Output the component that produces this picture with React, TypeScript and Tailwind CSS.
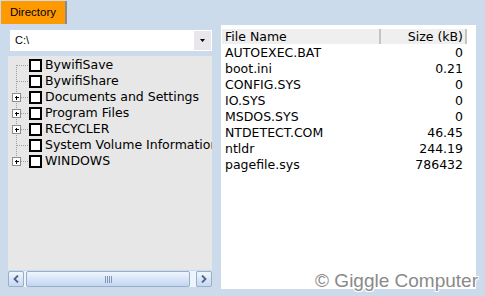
type Node = { name: string; expandable: boolean };

const folders: Node[] = [
  { name: "BywifiSave", expandable: false },
  { name: "BywifiShare", expandable: false },
  { name: "Documents and Settings", expandable: true },
  { name: "Program Files", expandable: true },
  { name: "RECYCLER", expandable: true },
  { name: "System Volume Information", expandable: false },
  { name: "WINDOWS", expandable: true },
];

const files = [
  { name: "AUTOEXEC.BAT", size: "0" },
  { name: "boot.ini", size: "0.21" },
  { name: "CONFIG.SYS", size: "0" },
  { name: "IO.SYS", size: "0" },
  { name: "MSDOS.SYS", size: "0" },
  { name: "NTDETECT.COM", size: "46.45" },
  { name: "ntldr", size: "244.19" },
  { name: "pagefile.sys", size: "786432" },
];

// dotted tree connector, one per row
function Connector({ first, last, plus }: { first: boolean; last: boolean; plus: boolean }) {
  return (
    <svg width="21" height="16" className="shrink-0" shapeRendering="crispEdges">
      <line x1="8.5" y1={first ? 8 : 0} x2="8.5" y2={last ? 8 : 16} stroke="#a0a0a0" strokeDasharray="1 1" />
      <line x1="9" y1="8.5" x2="21" y2="8.5" stroke="#a0a0a0" strokeDasharray="1 1" />
      {plus && (
        <>
          <rect x="4.5" y="4.5" width="8" height="8" fill="#fff" stroke="#8c8c8c" />
          <line x1="6.5" y1="8.5" x2="11" y2="8.5" stroke="#000" />
          <line x1="8.5" y1="6.5" x2="8.5" y2="11" stroke="#000" />
        </>
      )}
    </svg>
  );
}

function ScrollButton({ dir }: { dir: "left" | "right" }) {
  return (
    <div className="w-[16px] h-[16px] rounded-[2px] border border-[#9aaec8] bg-gradient-to-b from-[#f0f6fe] to-[#c6d8f2] flex items-center justify-center">
      <svg width="6" height="8" viewBox="0 0 6 8">
        <path
          d={dir === "left" ? "M5 0.5 L1.5 4 L5 7.5" : "M1 0.5 L4.5 4 L1 7.5"}
          fill="none"
          stroke="#4d6185"
          strokeWidth="1.8"
        />
      </svg>
    </div>
  );
}

export default function App() {
  return (
    <div className="relative w-[485px] h-[296px] bg-[#cbdbeb] overflow-hidden" style={{ fontFamily: "'DejaVu Sans', sans-serif" }}>
      {/* tab strip */}
      <div className="h-[24px] pt-[1px] pl-[1px] flex">
        <div className="w-[66px] h-[23px] bg-[#ff9900] border-r-2 border-[#8a8a8a] flex items-center justify-center text-[11.5px] text-black font-['Liberation_Sans',sans-serif]">
          Directory
        </div>
      </div>

      <div className="flex">
        {/* left: drive combo + folder tree */}
        <div className="w-[204px] ml-[8px] flex flex-col">
          <div className="ml-[2px] mt-[6px] h-[21px] bg-white flex items-center">
            <span className="flex-1 pl-[5px] text-[11px] font-['Liberation_Sans',sans-serif]">C:\</span>
            <div className="w-[17px] h-[19px] mr-[1px] bg-[#e9e7ec] flex items-center justify-center">
              <svg width="5" height="3" viewBox="0 0 5 3">
                <path d="M0 0 H5 L2.5 3 Z" fill="#000" />
              </svg>
            </div>
          </div>

          <div className="mt-[5px] h-[214px] bg-[#e7e7e7] overflow-hidden pt-[1px]">
            {folders.map((f, i) => (
              <div key={f.name} className="h-[16px] flex items-center whitespace-nowrap">
                <Connector first={i === 0} last={i === folders.length - 1} plus={f.expandable} />
                <div className="w-[13px] h-[13px] border-2 border-black bg-white shrink-0" />
                <span className="ml-[3px] text-[12.5px] leading-[16px] text-black">{f.name}</span>
              </div>
            ))}
          </div>

          <div className="mt-[1px] h-[16px] flex items-center">
            <ScrollButton dir="left" />
            <div className="flex-1 h-[16px] bg-[#eef4fd] flex pl-[2px] pr-[6px]">
              <div className="flex-1 h-[16px] rounded-[2px] border border-[#9aaec8] bg-gradient-to-b from-[#eef5ff] to-[#c3d6f1] flex items-center justify-center gap-[1px]">
                <div className="w-[1px] h-[7px] bg-[#8497b5]" />
                <div className="w-[1px] h-[7px] bg-[#8497b5]" />
                <div className="w-[1px] h-[7px] bg-[#8497b5]" />
                <div className="w-[1px] h-[7px] bg-[#8497b5]" />
              </div>
            </div>
            <ScrollButton dir="right" />
          </div>
        </div>

        {/* right: file list */}
        <div className="ml-[9px] mt-[1px] w-[255px] h-[264px] bg-white pt-[3px] pl-[1px]">
          <div className="w-[245px] h-[16px] flex bg-[#f0efef] text-[12.5px] text-black border-t border-white">
            <div className="w-[159px] pl-[3px] leading-[15px] border-r-2 border-[#c4c4c4]">File Name</div>
            <div className="flex-1 pr-[2px] text-right leading-[15px] border-r-2 border-[#c4c4c4]">Size (kB)</div>
          </div>
          <div className="pt-[1px]">
            {files.map((f) => (
              <div key={f.name} className="w-[245px] h-[16px] flex text-[12.5px] leading-[16px] text-black">
                <div className="w-[159px] pl-[3px]">{f.name}</div>
                <div className="flex-1 pr-[4px] text-right">{f.size}</div>
              </div>
            ))}
          </div>
        </div>
      </div>

      {/* watermark */}
      <div
        className="absolute right-[7px] bottom-[5px] text-[19px] leading-[20px] text-[#8a8a8a] font-['Liberation_Sans',sans-serif]"
        style={{ textShadow: "1px 1px 0 #fff, -1px -1px 0 #fff, 1px -1px 0 #fff, -1px 1px 0 #fff" }}
      >
        © Giggle Computer
      </div>
    </div>
  );
}
